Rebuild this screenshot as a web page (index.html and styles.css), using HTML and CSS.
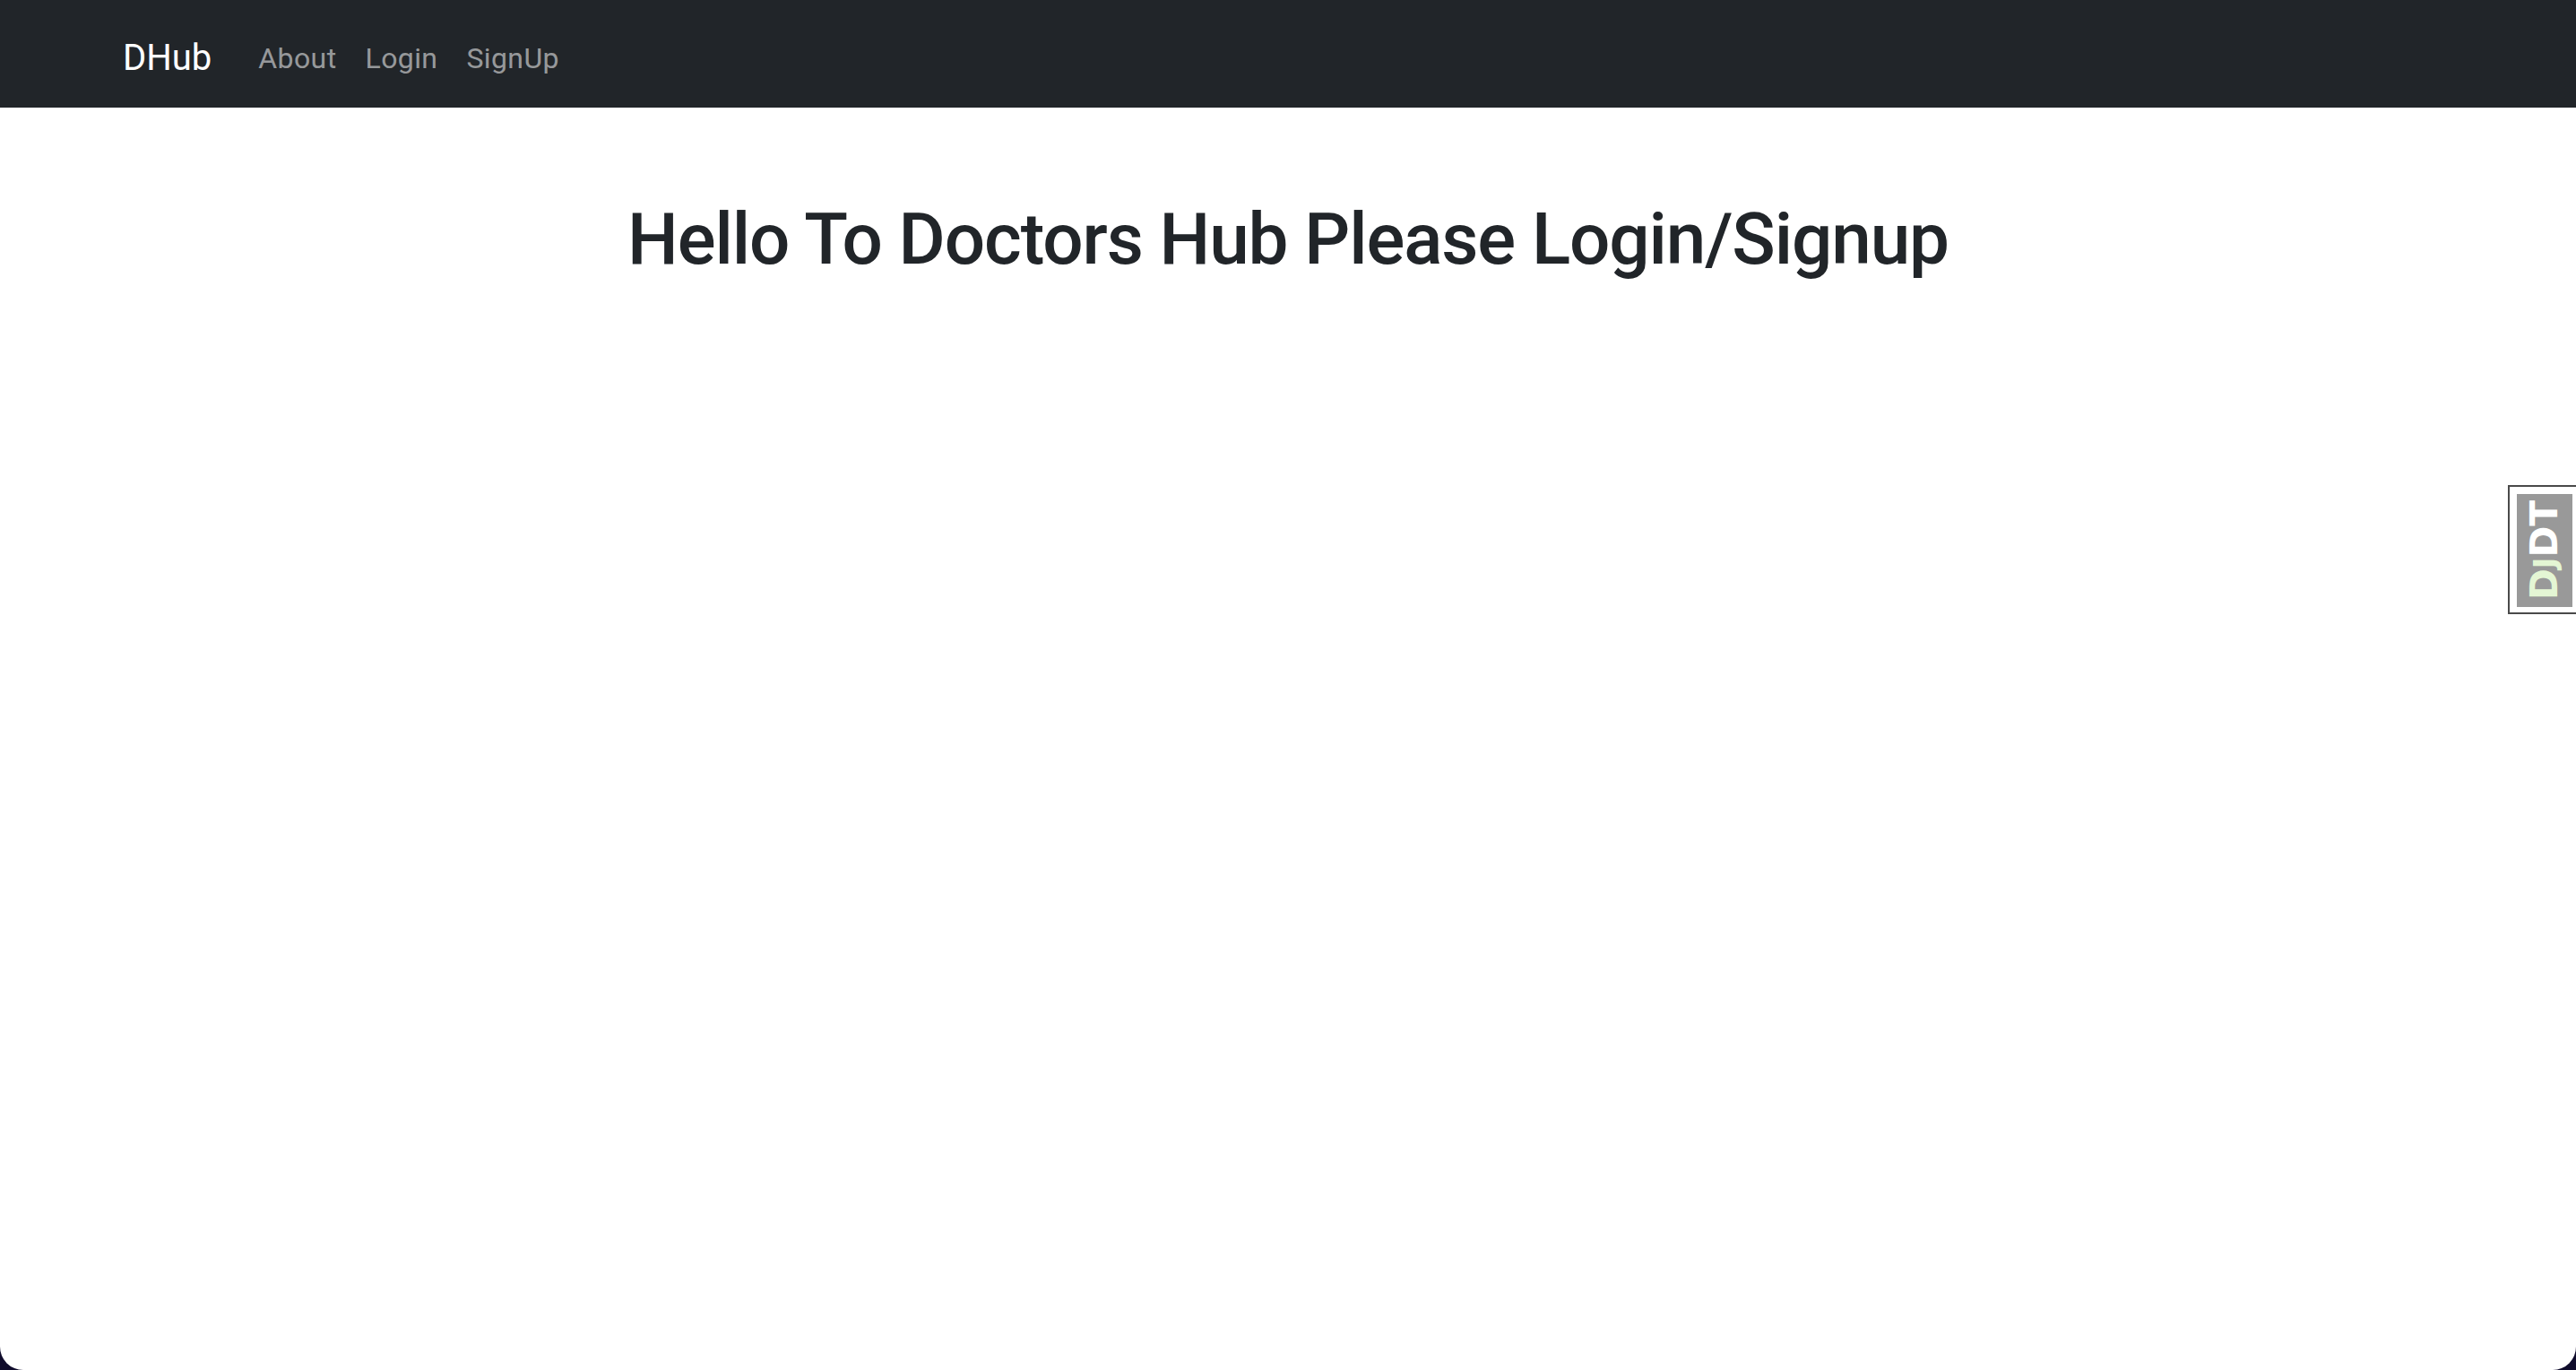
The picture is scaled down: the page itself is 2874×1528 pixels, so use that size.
FILE: index.html
```html
<!DOCTYPE html>
<html lang="en">
<head>
<meta charset="utf-8">
<title>DHub</title>
<link rel="stylesheet" href="styles.css">
</head>
<body>
<div class="page">
  <nav class="navbar">
    <div class="nav-inner">
      <a class="brand" href="#">DHub</a>
      <ul class="nav-links">
        <li><a class="nav-link" href="#">About</a></li>
        <li><a class="nav-link" href="#">Login</a></li>
        <li><a class="nav-link" href="#">SignUp</a></li>
      </ul>
    </div>
  </nav>
  <main class="content">
    <h1 class="title">Hello To Doctors Hub Please Login/Signup</h1>
  </main>
  <div class="djdt-handle">
    <div class="djdt-button"><span class="djdt-text"><span class="djdt-d">D</span><span class="djdt-j">J</span>DT</span></div>
  </div>
</div>
</body>
</html>
```
FILE: styles.css
```css
html {
  background: #100c2c;
  height: 100%;
}
body {
  margin: 0;
  height: 100%;
  font-family: Roboto, "Liberation Sans", sans-serif;
  color: #212529;
}
.page {
  position: relative;
  min-height: 100%;
  background: #fff;
  border-radius: 0 0 26px 26px;
  overflow: hidden;
}
.navbar {
  background: #212529;
  height: 120px;
  display: flex;
  align-items: center;
}
.nav-inner {
  display: flex;
  align-items: center;
  padding-left: 137px;
  padding-top: 10px;
}
.brand {
  color: #fff;
  text-decoration: none;
  font-size: 40px;
  line-height: 60px;
  margin-right: 36px;
}
.nav-links {
  display: flex;
  list-style: none;
  margin: 0;
  padding: 0;
}
.nav-link {
  display: block;
  color: rgba(255, 255, 255, 0.55);
  text-decoration: none;
  font-size: 32px;
  line-height: 48px;
  padding: 0 16px;
  letter-spacing: 0.4px;
}
.content {
  display: flex;
  justify-content: center;
}
.title {
  margin: 99px 0 0;
  font-size: 80px;
  font-weight: 500;
  line-height: 96px;
  letter-spacing: -1.1px;
}
.djdt-handle {
  position: absolute;
  right: 0;
  top: 541px;
  border: 2px solid #4a4a4a;
  border-right: 0;
  background: #fff;
  padding: 8px 4px 6px 8px;
  box-sizing: border-box;
  height: 144px;
  width: 76px;
  display: flex;
}
.djdt-button {
  flex: 1;
  background: #999;
  display: flex;
  align-items: center;
  justify-content: center;
}
.djdt-text {
  writing-mode: vertical-rl;
  transform: rotate(180deg);
  font-family: "DejaVu Sans", sans-serif;
  font-weight: bold;
  font-size: 42px;
  line-height: 1;
  color: #fff;
}
.djdt-d, .djdt-j {
  color: #e4f6d4;
}
.djdt-j {
  font-size: 34px;
}
```
